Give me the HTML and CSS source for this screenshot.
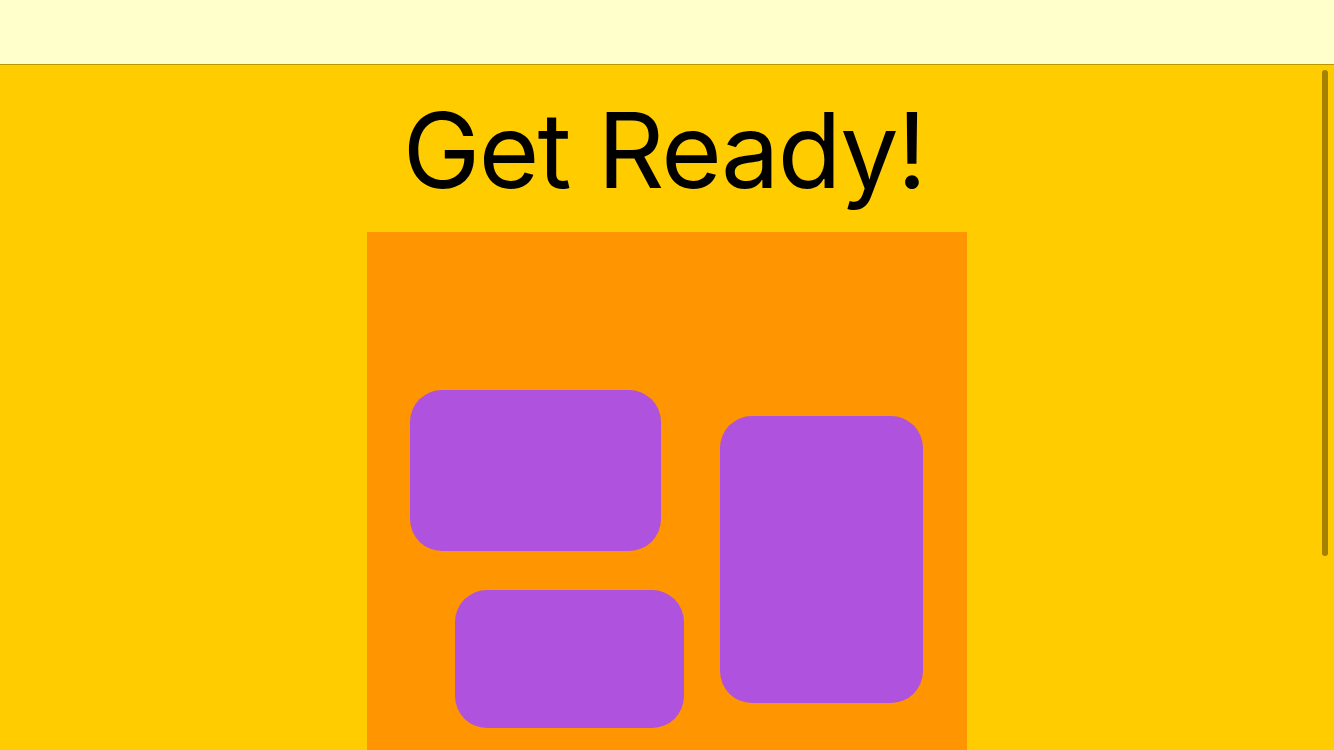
FILE: index.html
```html
<!DOCTYPE html>
<html>
<head>
<meta charset="utf-8">
<link rel="stylesheet" href="styles.css">
</head>
<body>
<div class="topbar"></div>
<main class="main">
  <h1 class="title">Get Ready!</h1>
  <div class="stage">
    <div class="tile tile-a"></div>
    <div class="tile tile-b"></div>
    <div class="tile tile-c"></div>
  </div>
  <div class="scroll-indicator"></div>
</main>
</body>
</html>
```
FILE: styles.css
```css
html, body {
  margin: 0;
  padding: 0;
  height: 100%;
  overflow: hidden;
}
body {
  font-family: Inter, "Noto Sans", sans-serif;
  background: #FFCC00;
}
.topbar {
  height: 64px;
  background: #FFFFCC;
  border-bottom: 1px solid #B89A00;
}
.main {
  position: relative;
  display: flex;
  flex-direction: column;
  align-items: center;
  background: #FFCC00;
  height: calc(100% - 65px);
}
.title {
  margin: 19px 6px 0 0;
  font-size: 104px;
  font-weight: 400;
  line-height: 132px;
  color: #000;
  letter-spacing: -1.7px;
}
.stage {
  position: relative;
  margin-top: 16px;
  width: 600px;
  height: 600px;
  flex-shrink: 0;
  background: #FF9500;
}
.tile {
  position: absolute;
  background: #AF52DE;
  border-radius: 32px;
}
.tile-a { left: 43px; top: 158px; width: 251px; height: 161px; }
.tile-b { left: 88px; top: 358px; width: 229px; height: 138px; }
.tile-c { left: 353px; top: 184px; width: 203px; height: 287px; }
.scroll-indicator {
  position: absolute;
  right: 6px;
  top: 5px;
  width: 6px;
  height: 486px;
  border-radius: 3px;
  background: #A38200;
}
```
